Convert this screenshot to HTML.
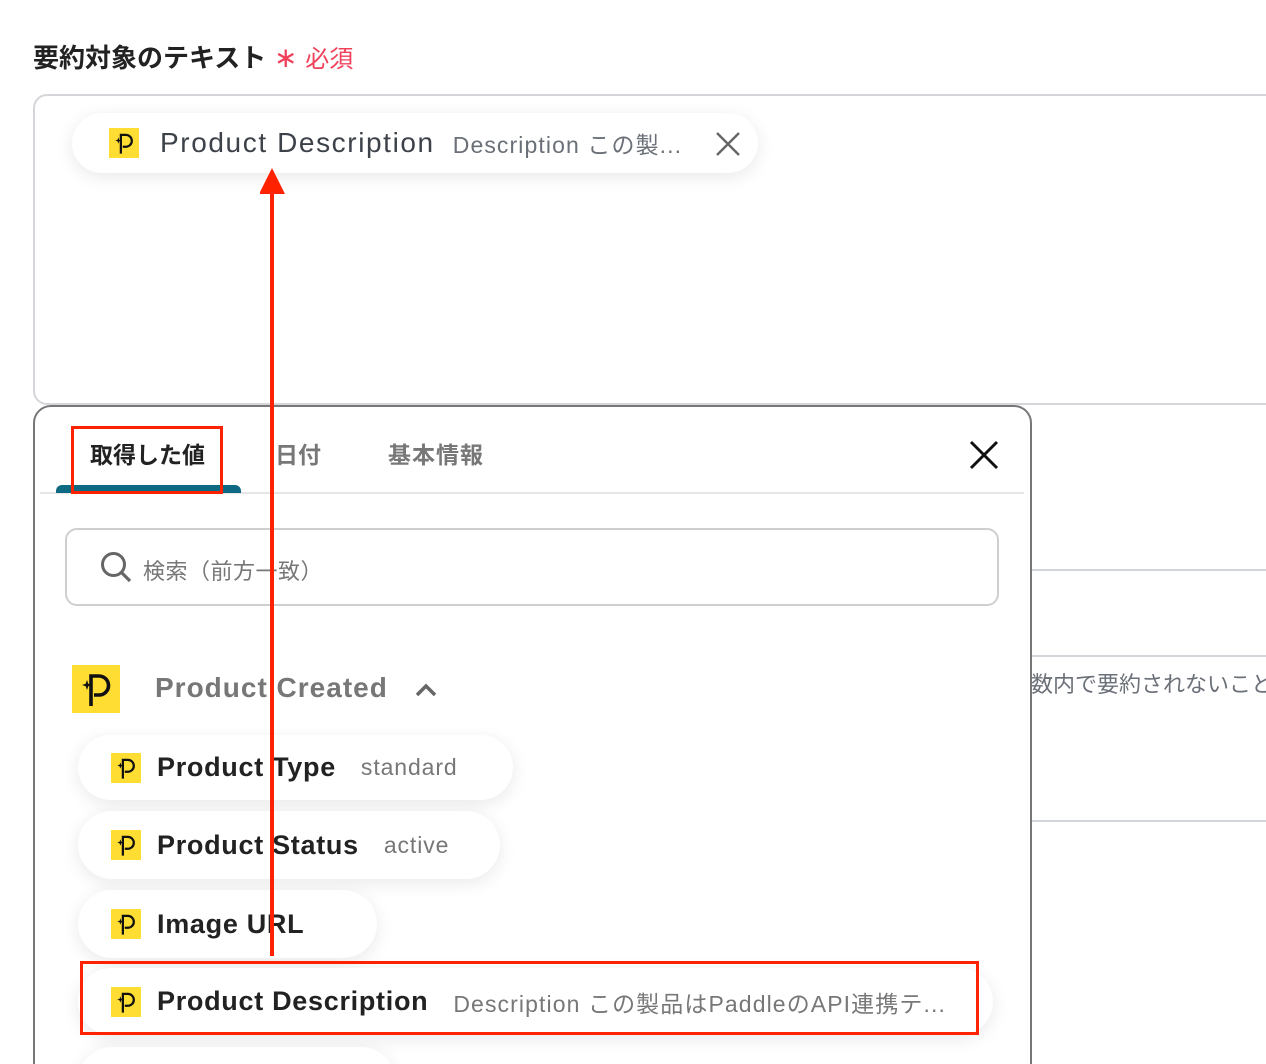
<!DOCTYPE html>
<html style="width:1266px;height:1064px;overflow:hidden"><head><meta charset="utf-8">
<style>
*{margin:0;padding:0;box-sizing:border-box}
body{width:1266px;height:1064px;background:#fff;position:relative;overflow:hidden;font-family:"Liberation Sans","Noto Sans CJK JP",sans-serif}
.a{position:absolute}
.pill{position:absolute;background:#fff;border-radius:34px;box-shadow:0 4px 18px rgba(0,0,0,0.09);display:flex;align-items:center;white-space:nowrap}
.ic{width:30px;height:30px;flex:none}
.nm{font-size:27px;font-weight:bold;color:#222;margin-left:16px;letter-spacing:0.7px}
.vl{font-size:23px;color:#777;margin-left:25px;letter-spacing:0.9px}
</style></head><body>
<svg width="0" height="0" style="position:absolute"><defs>
<symbol id="lg" viewBox="0 0 48 48"><rect width="48" height="48" fill="#ffdd33"/><path d="M19 41V11H27A9.5 9.5 0 0 1 27 30H22" fill="none" stroke="#111" stroke-width="3.6"/><path d="M15 15 L16.3 18.7 L20 20 L16.3 21.3 L15 25 L13.7 21.3 L10 20 L13.7 18.7Z" fill="#111"/></symbol>
</defs></svg>

<div class="a" style="left:33px;top:38px;font-size:26px;font-weight:bold;color:#222;white-space:nowrap">要約対象のテキスト<span style="color:#f0405a;font-weight:normal;font-size:28px"> ∗ </span><span style="color:#f0405a;font-size:24px;font-weight:normal">必須</span></div>

<div class="a" style="left:33px;top:94px;width:1260px;height:311px;border:2px solid #d4d6da;border-radius:14px"></div>
<div class="pill" style="left:72px;top:113px;width:686px;height:60px;padding-left:37px">
<svg class="ic"><use href="#lg"/></svg>
<span style="font-size:28px;color:#3d424a;margin-left:21px;letter-spacing:1.6px">Product Description</span>
<span style="font-size:23px;color:#6b7078;margin-left:18px;letter-spacing:1.1px">Description この製...</span>
<svg class="a" style="left:643px;top:18px" width="26" height="26"><path d="M2 2L24 24M24 2L2 24" stroke="#666" stroke-width="2.4"/></svg>
</div>

<div class="a" style="left:1031px;top:569px;width:235px;height:2px;background:#d2d5d9"></div>
<div class="a" style="left:1031px;top:655px;width:235px;height:2px;background:#d2d5d9"></div>
<div class="a" style="left:1031px;top:820px;width:235px;height:2px;background:#d2d5d9"></div>
<div class="a" style="left:1031px;top:667px;font-size:22px;color:#6b7078;white-space:nowrap">数内で要約されないこと</div>

<div class="a" style="left:33px;top:405px;width:999px;height:700px;border:2px solid #777;border-radius:18px;background:#fff"></div>
<div class="a" style="left:90px;top:436px;font-size:23px;font-weight:bold;color:#222">取得した値</div>
<div class="a" style="left:275px;top:436px;font-size:23px;font-weight:bold;color:#777">日付</div>
<div class="a" style="left:388px;top:436px;font-size:23px;font-weight:bold;color:#777;letter-spacing:1px">基本情報</div>
<div class="a" style="left:40px;top:492px;width:984px;height:2px;background:#e6e6e6"></div>
<div class="a" style="left:56px;top:485px;width:185px;height:8px;background:#0e6a82;border-radius:6px 6px 0 0"></div>
<svg class="a" style="left:969px;top:440px" width="30" height="30"><path d="M2 2L28 28M28 2L2 28" stroke="#111" stroke-width="3"/></svg>

<div class="a" style="left:65px;top:528px;width:934px;height:78px;border:2px solid #cfcfcf;border-radius:12px"></div>
<svg class="a" style="left:100px;top:551px" width="34" height="34"><circle cx="13.5" cy="13.5" r="11" fill="none" stroke="#666" stroke-width="3"/><path d="M21.5 21.5L30 30" stroke="#666" stroke-width="3.2"/></svg>
<div class="a" style="left:143px;top:554px;font-size:22px;color:#777;letter-spacing:0.5px">検索（前方一致）</div>

<svg class="a" style="left:72px;top:665px" width="48" height="48"><use href="#lg"/></svg>
<div class="a" style="left:155px;top:672px;font-size:28px;font-weight:bold;color:#777;letter-spacing:1px">Product Created</div>
<svg class="a" style="left:414px;top:682px" width="24" height="16"><path d="M3 13L12 4L21 13" fill="none" stroke="#666" stroke-width="3.5"/></svg>

<div class="pill" style="left:78px;top:735px;width:435px;height:65px;padding-left:33px"><svg class="ic"><use href="#lg"/></svg><span class="nm">Product Type</span><span class="vl">standard</span></div>
<div class="pill" style="left:78px;top:811px;width:422px;height:68px;padding-left:33px"><svg class="ic"><use href="#lg"/></svg><span class="nm">Product Status</span><span class="vl">active</span></div>
<div class="pill" style="left:78px;top:890px;width:299px;height:68px;padding-left:33px"><svg class="ic"><use href="#lg"/></svg><span class="nm">Image URL</span></div>
<div class="pill" style="left:78px;top:968px;width:915px;height:67px;padding-left:33px"><svg class="ic"><use href="#lg"/></svg><span class="nm">Product Description</span><span class="vl" style="letter-spacing:1.1px">Description この製品はPaddleのAPI連携テ...</span></div>
<div class="pill" style="left:78px;top:1047px;width:317px;height:68px"></div>
<div class="a" style="left:40px;top:722px;width:620px;height:14px;background:linear-gradient(#fff,rgba(255,255,255,0))"></div>

<div class="a" style="left:80px;top:961px;width:899px;height:74px;border:3.5px solid #ff2200"></div>
<div class="a" style="left:71px;top:426px;width:152px;height:68px;border:3.5px solid #ff2200"></div>
<div class="a" style="left:270px;top:190px;width:4px;height:766px;background:#ff2200"></div>
<svg class="a" style="left:260px;top:167px" width="26" height="27"><path d="M12 1L25 27H-1Z" fill="#ff2200"/></svg>
</body></html>
